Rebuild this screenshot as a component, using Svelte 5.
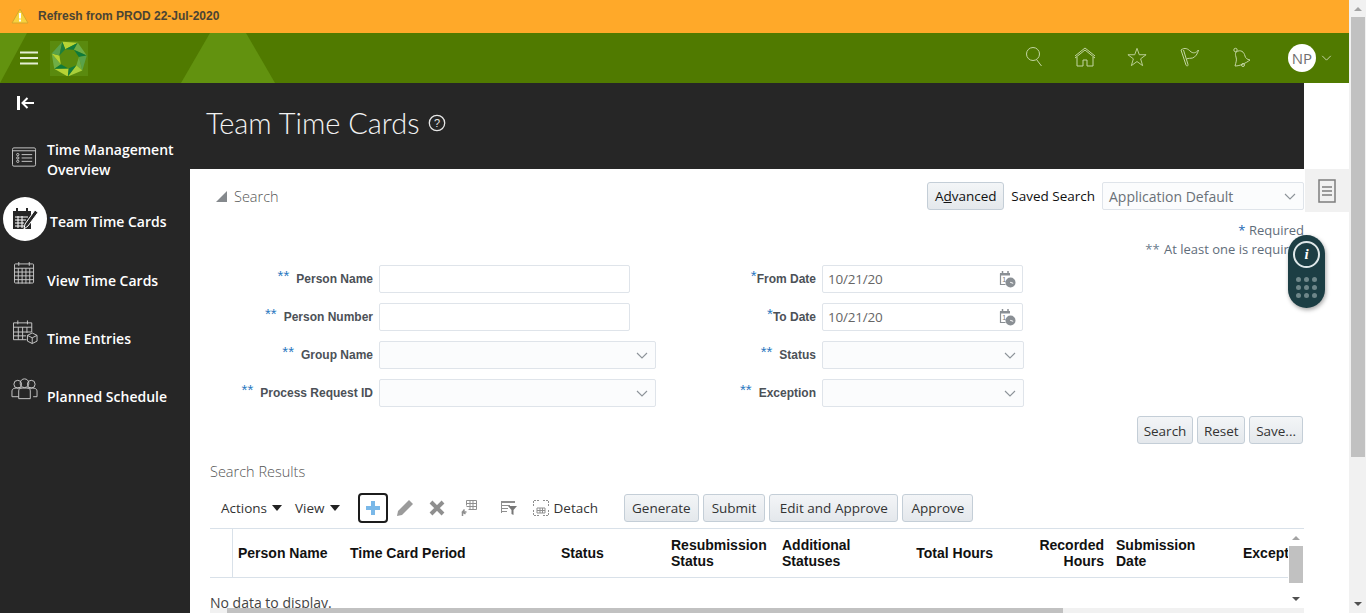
<script>
  const nav = [
    { id: 'overview', label: 'Time Management Overview' },
    { id: 'team', label: 'Team Time Cards', active: true },
    { id: 'view', label: 'View Time Cards' },
    { id: 'entries', label: 'Time Entries' },
    { id: 'planned', label: 'Planned Schedule' }
  ];
  const left = [
    { label: 'Person Name', type: 'text' },
    { label: 'Person Number', type: 'text' },
    { label: 'Group Name', type: 'select' },
    { label: 'Process Request ID', type: 'select' }
  ];
  const right = [
    { label: 'From Date', type: 'date', req: 1 },
    { label: 'To Date', type: 'date', req: 1 },
    { label: 'Status', type: 'select' },
    { label: 'Exception', type: 'select' }
  ];
  const cols = [
    { t: ['Person Name'], c: 'c1' },
    { t: ['Time Card Period'], c: 'c2' },
    { t: ['Status'], c: 'c3' },
    { t: ['Resubmission', 'Status'], c: 'c4' },
    { t: ['Additional', 'Statuses'], c: 'c5' },
    { t: ['Total Hours'], c: 'c6 ra' },
    { t: ['Recorded', 'Hours'], c: 'c7 ra' },
    { t: ['Submission', 'Date'], c: 'c8' },
    { t: ['Exception'], c: 'c9' }
  ];
  const n = 7, cx = 19, cy = 17.5;
  const pt = (r, i) => {
    const a = ((i * 360) / n - 112) * Math.PI / 180;
    return [(cx + r * Math.cos(a)).toFixed(1), (cy + r * Math.sin(a)).toFixed(1)].join(',');
  };
  const outerColors = ['#b6d335', '#6fae45', '#5aa24a', '#a8cf3a', '#b6d335', '#6fae45', '#5aa24a'];
  const innerColors = ['#137c3c', '#0e7a3b', '#6fae45', '#137c3c', '#0f7a3a', '#b6d335', '#1d7f3c'];
  const tris = [];
  for (let i = 0; i < n; i++) {
    tris.push({ c: outerColors[i], p: [pt(18, i), pt(18, i + 1), pt(10, i)].join(' ') });
    tris.push({ c: innerColors[i], p: [pt(10, i), pt(10, i + 1), pt(18, i + 1)].join(' ') });
  }
</script>

{#snippet dateIcon()}
  <svg class="date-ic" viewBox="0 0 18 18" width="18" height="18">
    <path d="M2.500 3.500v11h5" fill="none" stroke="#8a8f94" stroke-width="1.200"/>
    <path d="M2 3h10v2.500H2z" fill="#8a8f94"/>
    <path d="M4.500 1v3M10 1v3" stroke="#8a8f94" stroke-width="1.500"/>
    <text x="4.200" y="12" font-size="7" fill="#777" font-family="Liberation Sans">1</text>
    <circle cx="12.500" cy="12.500" r="5" fill="#8a8f94"/>
    <path d="M12.200 12.300l3 1" stroke="#fff" stroke-width="1"/>
  </svg>
{/snippet}

{#snippet chevron()}
  <svg class="chev" viewBox="0 0 12 7" width="12" height="7"><path d="M1 1l5 5 5-5" fill="none" stroke="#8d9399" stroke-width="1.100"/></svg>
{/snippet}

{#snippet field(f)}
  <div class="row">
    <div class="lab">
      {#if f.req}<span class="req">*</span>{:else}<span class="req dbl">**</span>{/if}<span class="lt">{f.label}</span>
    </div>
    {#if f.type === 'select'}
      <div class="inp sel wide">{@render chevron()}</div>
    {:else if f.type === 'date'}
      <div class="inp date"><span>10/21/20</span>{@render dateIcon()}</div>
    {:else}
      <div class="inp"></div>
    {/if}
  </div>
{/snippet}

<div class="page">
  <div class="viewport">
    <div class="banner">
      <svg viewBox="0 0 18 16" width="18" height="16"><path d="M9 1L17 15H1z" fill="#f7d23e" stroke="#d6a62c" stroke-width="1"/><path d="M9 5v5.500" stroke="#fff" stroke-width="2"/><path d="M9 11.500v2" stroke="#fff" stroke-width="2"/></svg>
      <span>Refresh from PROD 22-Jul-2020</span>
    </div>
    <header class="top">
      <svg class="deco" viewBox="0 0 1349 50" width="1349" height="50"><path d="M0 0H27L0 50z" fill="#62920f"/><path d="M210 0h36l29 50H181z" fill="#62920f"/></svg>
      <svg class="burger" viewBox="0 0 18 14" width="18" height="14"><path d="M0 1.500h18M0 7h18M0 12.500h18" stroke="#e4eed3" stroke-width="2"/></svg>
      <svg class="logo" viewBox="0 0 38 35" width="38" height="35">
        <rect width="38" height="35" fill="#5a8a0e"/>
        {#each tris as t}<polygon points={t.p} fill={t.c}/>{/each}
      </svg>
      <div class="icons">
        <svg viewBox="0 0 18 20" width="18" height="20"><circle cx="7" cy="7" r="6.500"/><path d="M10.500 12.500l5 6.500"/></svg>
        <svg viewBox="0 0 22 20" width="22" height="20"><path d="M1 9l10-8 10 8M1 11l10-8 10 8M3 10v9h6v-6h4v6h6v-9"/></svg>
        <svg viewBox="0 0 22 21" width="20" height="20"><path d="M11 1l2.500 7H21l-6 4.500 2.200 7.500L11 15.500 4.800 20 7 12.500 1 8h7.500z"/></svg>
        <svg class="flag" viewBox="0 0 20 20" width="20" height="20"><path d="M1 3l5 15c.5 1.500 2.500 1 2-.5L3.500 3"/><path d="M1 3C5 0 8 2 10 4c3 3 6 2 8.500-1-1 4-3 7-6 8-2 .5-4 0-6 1"/></svg>
        <svg viewBox="0 0 20 21" width="20" height="21"><path d="M4 5C9 2 12 5 13 9c.5 2 2 3.500 5 4-4 3-10 6-15 6 1-4 2-6 1-9-.5-2-1-3 0-5z"/><circle cx="3.500" cy="3" r="1.700"/><circle cx="11" cy="18" r="1.500"/></svg>
      </div>
      <div class="avatar">NP</div>
      <svg class="av-chev" viewBox="0 0 12 7" width="11" height="6"><path d="M1 1l5 5 5-5" fill="none" stroke="#d5e2bf" stroke-width="1"/></svg>
    </header>

    <div class="body">
      <aside class="side">
        <svg class="collapse" viewBox="0 0 18 14" width="18" height="14"><path d="M1.500 0v14" stroke="#fff" stroke-width="3"/><path d="M17 7H6M10.500 2L5.500 7l5 5" fill="none" stroke="#fff" stroke-width="2"/></svg>
        <nav>
          {#each nav as n}
            <div class="nav-item {n.id}" class:active={n.active}>
              <span class="nav-ic">
                {#if n.id === 'overview'}
                  <svg viewBox="0 0 26 21" width="25" height="21" fill="none" stroke="#c9c9c9"><rect x=".5" y=".5" width="24" height="19" rx="1.500"/><path d="M.5 3.500h24M10 7.500h11M10 11h11M10 14.500h11"/><circle cx="6" cy="7.500" r="1.200"/><circle cx="6" cy="11" r="1.200"/><circle cx="6" cy="14.500" r="1.200"/></svg>
                {:else if n.id === 'team'}
                  <svg viewBox="0 0 26 26" width="26" height="26"><rect x="1" y="5" width="18" height="18" fill="#262626"/><path d="M5 2v5M15 2v5" stroke="#262626" stroke-width="2"/><path d="M3 11h13M3 14h11M3 17h9M3 20h9M6 10v12M10 10v12" stroke="#fff" stroke-width="1"/><path d="M23 4l3 2.500L16 20l-4 3 1-5z" fill="#262626" stroke="#fff" stroke-width="1"/></svg>
                {:else if n.id === 'view'}
                  <svg viewBox="0 0 22 24" width="21" height="24" fill="none" stroke="#c9c9c9"><rect x=".5" y="2.500" width="20" height="20" rx="1"/><path d="M.5 7h20M.5 11h20M.5 15h20M.5 19h20M4.500 7v16M8.500 7v16M12.500 7v16M16.500 7v16M5 .5v4M16 .5v4"/></svg>
                {:else if n.id === 'entries'}
                  <svg viewBox="0 0 26 26" width="25" height="26" fill="none" stroke="#c9c9c9"><path d="M14 21H.5V3.500h19V13M.5 8h19M.5 13h19M.5 17h13M5.500 8v13M10 8v13M14.500 8v6M5 1v4M15 1v4"/><path d="M20 14l5 2.500v6L20 25l-5-2.500v-6zM15 16.500l5 2.500 5-2.500M20 19v6"/></svg>
                {:else}
                  <svg viewBox="0 0 28 22" width="27" height="22" fill="none" stroke="#c9c9c9"><circle cx="14" cy="5" r="4.500"/><circle cx="7" cy="6" r="4"/><circle cx="21" cy="6" r="4"/><path d="M1 19v-6c0-2 2-3 5-3h16c3 0 5 1 5 3v6h-4M8 21v-8c0-2 1-3 3-3M20 21v-8c0-2-1-3-3-3M8 21h12M1 19h7"/></svg>
                {/if}
              </span>
              <span class="nav-t">{n.label}</span>
            </div>
          {/each}
        </nav>
      </aside>

      <main class="main">
        <div class="title"><h1>Team Time Cards</h1>
          <svg viewBox="0 0 18 18" width="18" height="18"><circle cx="9" cy="9" r="7.700" fill="none" stroke="#e6e6e6" stroke-width="1.300"/><text x="9" y="13" text-anchor="middle" font-size="11" fill="#e6e6e6" font-family="Liberation Sans">?</text></svg>
        </div>
        <div class="content">
          <div class="search-head">
            <div class="disc"><i class="tri"></i><span>Search</span></div>
            <div class="saved">
              <button class="btn adv">A<u>d</u>vanced</button>
              <span class="saved-l">Saved Search</span>
              <div class="inp sel ss"><span>Application Default</span>{@render chevron()}</div>
            </div>
          </div>
          <div class="notes">
            <div><span class="star">*</span> Required</div>
            <div><span class="star2">**</span> At least one is required</div>
          </div>
          <div class="form">
            <div class="col lc">{#each left as f}{@render field(f)}{/each}</div>
            <div class="col rc">{#each right as f}{@render field(f)}{/each}</div>
          </div>
          <div class="actions">
            <button class="btn">Search</button><button class="btn">Reset</button><button class="btn">Save...</button>
          </div>
          <h2>Search Results</h2>
          <div class="toolbar">
            <span class="menu">Actions <i class="caret"></i></span>
            <span class="menu">View <i class="caret"></i></span>
            <span class="add"><svg viewBox="0 0 14 14" width="14" height="14"><path d="M7 0v14M0 7h14" stroke="#7ab8e8" stroke-width="4"/></svg></span>
            <svg class="t-pen" viewBox="0 0 18 18" width="18" height="18"><path d="M13 1l4 4L6 16l-5 1 1-5z" fill="#9b9b9b"/></svg>
            <svg class="t-x" viewBox="0 0 16 16" width="16" height="16"><path d="M2 2l12 12M14 2L2 14" stroke="#8f8f8f" stroke-width="4"/></svg>
            <svg class="t-fr" viewBox="0 0 18 18" width="18" height="18" fill="none" stroke="#8f8f8f"><path d="M6.500 1.500h10v9h-8M6.500 1.500v5M6.500 4.500h10M6.500 7.500h10M10 1.500v9M13 1.500v9"/><path d="M2.500 17v-4h4M4.500 10.500l-2 2.500 3 2" stroke-width="1.500"/></svg>
            <svg class="t-fl" viewBox="0 0 18 16" width="18" height="16"><path d="M1 1h14v2H1zM1 5h9v1H1zM1 8h7v1H1zM1 11h6v1H1zM1 1h1v12H1z" fill="#8f8f8f"/><path d="M8 6h9l-3.500 4v5l-2-1v-4z" fill="#777"/></svg>
            <span class="detach">
              <svg viewBox="0 0 16 16" width="16" height="16" fill="none" stroke="#8f8f8f"><path d="M.5 10v5.500H6M10 .5h5.500V6M.5 6V.5H7M15.500 10v5.500H10" stroke-dasharray="2 1"/><path d="M4 8h8v5H4zM4 10.500h8M7 8v5M9.500 8v5"/></svg>
              Detach
            </span>
            <span class="t-btns">
              <button class="btn">Generate</button><button class="btn">Submit</button><button class="btn">Edit and Approve</button><button class="btn">Approve</button>
            </span>
          </div>
          <div class="table">
            <div class="thead">
              <div class="c0"></div>
              {#each cols as col}
                <div class="th {col.c}">{#each col.t as line}<div>{line}</div>{/each}</div>
              {/each}
            </div>
            <div class="nodata">No data to display.</div>
            <div class="hbar"><b></b></div>
            <div class="vbar"><i class="up"></i><b></b><i class="dn"></i></div>
          </div>
        </div>
      </main>

      <div class="rail">
        <div class="tab">
          <svg viewBox="0 0 18 24" width="18" height="24" fill="none" stroke="#7d7d7d"><rect x="1" y="1" width="16" height="22" stroke-width="1.500"/><path d="M4 8h10M4 12h10M4 16h10" stroke-width="1.500"/></svg>
        </div>
      </div>
    </div>
  </div>
  <div class="scroll">
    <i class="up"></i><b></b><i class="dn"></i>
  </div>
  <div class="pill">
    <span class="pill-i">i</span>
    <span class="dots">{#each Array(9) as _}<i></i>{/each}</span>
  </div>
</div>

<style>
  :global(body) { margin: 0; background: #fff; }
  .page { position: relative; display: flex; width: 1366px; height: 613px; overflow: hidden; font-family: "Open Sans", "Noto Sans", sans-serif; color: #333; }
  .viewport { width: 1349px; display: flex; flex-direction: column; }
  .banner { height: 33px; background: #ffa929; display: flex; align-items: center; gap: 9px; padding-left: 11px; font: bold 12px "Liberation Sans", sans-serif; color: #4a4434; box-sizing: border-box; padding-bottom: 2px; }
  .top { position: relative; height: 50px; background: #507a00; display: flex; align-items: center; overflow: hidden; }
  .deco { position: absolute; left: 0; top: 0; }
  .burger { position: relative; margin-left: 20px; }
  .logo { position: relative; margin-left: 12px; }
  .icons { position: relative; display: flex; align-items: center; margin-left: auto; padding-bottom: 2px; }
  .icons svg { fill: none; stroke: #c3d6a2; stroke-width: 1; }
  .icons svg:nth-child(2) { margin-left: 30px; }
  .icons svg:nth-child(3) { margin-left: 31px; }
  .icons svg:nth-child(4) { margin-left: 33px; }
  .icons svg:nth-child(5) { margin-left: 32px; }
  .avatar { position: relative; width: 28px; height: 28px; border-radius: 50%; background: #fff; color: #6f6f6f; font-size: 15px; line-height: 28px; text-align: center; margin-left: 36px; }
  .av-chev { position: relative; margin-left: 5px; margin-right: 17px; }

  .body { flex: 1; display: flex; min-height: 0; }
  .side { width: 190px; background: #262626; position: relative; flex: none; }
  .collapse { display: block; margin: 13px 0 0 17px; }
  nav { margin-top: 30px; }
  .nav-item { display: flex; align-items: center; color: #fff; font-weight: 600; font-size: 14px; line-height: 20px; padding-left: 47px; position: relative; height: 44px; margin-bottom: 14px; }
  .nav-t { display: block; }
  .nav-item.overview { height: 40px; margin-bottom: 20px; }
  .nav-item.overview .nav-t { width: 140px; }
  .nav-item.team { margin-bottom: 15px; padding-left: 50px; }
  .nav-ic { position: absolute; left: 11px; display: flex; }
  .nav-item.overview .nav-ic { top: 7px; left: 12px; }
  .nav-item.view .nav-ic { left: 14px; top: 2px; }
  .nav-item.entries .nav-ic { left: 13px; top: 2px; }
  .nav-item.planned .nav-ic { left: 11px; top: 3px; }
  .nav-item.team .nav-ic { left: 3px; top: -3px; width: 44px; height: 44px; border-radius: 50%; background: #fff; align-items: center; justify-content: center; }

  .main { width: 1114px; flex: none; display: flex; flex-direction: column; min-width: 0; }
  .title { height: 86px; background: #262626; display: flex; align-items: center; gap: 8px; padding: 0 0 7px 16px; box-sizing: border-box; flex: none; }
  h1 { margin: 0; font-family: Lato, "Open Sans", sans-serif; font-weight: 300; font-size: 29px; color: #f2f2f2; line-height: 1; }
  .content { padding: 13px 0 0 20px; flex: 1; min-height: 0; position: relative; }
  .search-head { display: flex; justify-content: space-between; height: 28px; }
  .disc { display: flex; align-items: center; gap: 7px; padding-left: 6px; font-size: 14.500px; font-weight: 300; color: #555; }
  .tri { width: 0; height: 0; border-left: 11px solid transparent; border-bottom: 11px solid #85898d; }
  .saved { display: flex; align-items: center; }
  .btn { height: 28px; box-sizing: border-box; padding: 0 6px; border: 1px solid #c4ced7; border-radius: 3px; background: linear-gradient(#f3f5f7, #e4e8ec); font: 400 13.500px "Open Sans", sans-serif; color: #333; white-space: nowrap; }
  .adv { color: #111; width: 77px; padding: 0; }
  .saved-l { margin: 0 7px; font-size: 13.500px; color: #111; }
  .inp { height: 28px; box-sizing: border-box; width: 251px; border: 1px solid #dfe4ea; border-radius: 2px; background: #fff; display: flex; align-items: center; justify-content: space-between; padding: 0 6px 0 5px; font-size: 13.500px; letter-spacing: -.2px; color: #666; }
  .sel { background: #fbfcfd; }
  .chev { margin: 0 1px 0 auto; }
  .ss { width: 202px; color: #6a7178; font-size: 14px; letter-spacing: 0; padding-left: 6px; }
  .notes { text-align: right; font-size: 13px; color: #5f6d7a; line-height: 19px; margin-top: 11px; white-space: nowrap; }
  .notes > div { height: 19px; }
  .star { color: #1a67b3; }
  .star2 { color: #6b7d8d; margin-right: 1px; }
  .form { display: flex; margin-top: 6px; }
  .col { display: flex; flex-direction: column; gap: 10px; }
  .row { display: flex; align-items: center; }
  .lab { display: flex; justify-content: flex-end; align-items: center; font: bold 12px "Liberation Sans", sans-serif; color: #4c5157; text-align: right; white-space: nowrap; }
  .lc { width: 446px; flex: none; }
  .lc .lab { width: 163px; margin-right: 6px; }
  .rc .lab { width: 160px; margin-right: 6px; }
  .req { color: #2a78c0; font-size: 15px; font-weight: 400; line-height: 12px; align-self: flex-start; margin-top: -2px; }
  .dbl { margin-right: 7px; }
  .wide { width: 277px; }
  .rc .inp { width: 201px; }
  .rc .wide { width: 202px; }
  .date-ic { margin-right: 0; }
  .actions { display: flex; justify-content: flex-end; gap: 4px; margin: 9px 1px 0 0; }
  .actions .btn { padding-top: 1px; }
  .actions .btn:nth-child(2) { padding: 1px 5.500px 0; }
  h2 { margin: 18px 0 0; font-size: 14.500px; font-weight: 300; color: #555; line-height: 20px; }
  .toolbar { display: flex; align-items: center; height: 28px; margin-top: 12px; font-size: 13.500px; color: #333; padding-left: 11px; }
  .menu { display: inline-flex; align-items: center; gap: 5px; margin-right: 13px; }
  .menu + .menu { margin-right: 10px; }
  .caret { width: 0; height: 0; border: 5px solid transparent; border-top: 6px solid #222; border-bottom: 0; }
  .add { box-sizing: border-box; width: 30px; height: 30px; margin-left: 8px; border: 2px solid #1c1c1c; border-radius: 4px; display: flex; align-items: center; justify-content: center; }
  .t-pen { margin-left: 8px; }
  .t-x { margin-left: 15px; }
  .t-fr { margin-left: 15px; }
  .t-fl { margin-left: 22px; }
  .detach { display: inline-flex; align-items: center; gap: 5px; margin-left: 15px; color: #333; }
  .t-btns { display: inline-flex; gap: 4px; margin-left: 26px; }
  .t-btns .btn { padding: 0 8px; }
  .t-btns .btn:nth-child(1) { padding: 0 7px; }
  .t-btns .btn:nth-child(3) { padding: 0 9.500px; }
  .table { position: relative; margin-top: 6px; border-top: 1px solid #d9e1e9; }
  .thead { display: grid; grid-template-columns: 23px 112px 211px 110px 111px 117px 111px 111px 114px 90px; height: 48px; border-bottom: 1px solid #d9e1e9; overflow: hidden; font: bold 14px/16px "Liberation Sans", sans-serif; color: #111; }
  .c0 { border-right: 1px solid #d9e1e9; }
  .th { align-self: center; padding-left: 5px; white-space: nowrap; }
  .ra { text-align: right; padding: 0 12px 0 0; }
  .c8 { padding-left: 0; }
  .c9 { padding-left: 13px; }
  .vbar { position: absolute; right: 0; top: 0; bottom: 5px; width: 16px; background: #fff; display: flex; flex-direction: column; align-items: center; }
  .vbar .up { margin: 7px 0 6px; }
  .vbar b { width: 14px; height: 37px; background: #c1c1c1; }
  .vbar .dn { margin-top: auto; margin-bottom: 7px; }
  .nodata { height: 30px; line-height: 50px; font-size: 14px; color: #444; overflow: hidden; }
  .hbar { height: 5px; background: #f1f1f1; }
  .hbar b { display: block; width: 836px; height: 100%; margin-left: 17px; background: #c1c1c1; }

  .rail { flex: 1; position: relative; padding-top: 86px; }
  .tab { margin-left: 1px; height: 43px; background: #f1f1f1; display: flex; align-items: center; justify-content: center; }

  .scroll { width: 17px; background: #f1f1f1; position: relative; display: flex; flex-direction: column; align-items: center; }
  .scroll b { width: 14px; height: 440px; background: #c1c1c1; }
  .up, .dn { display: block; width: 0; height: 0; border: 4px solid transparent; flex: none; }
  .up { border-bottom: 4px solid #a3a3a3; border-top: 0; }
  .dn { border-top: 4px solid #505050; border-bottom: 0; }
  .scroll .up { margin: 7px 0 6px; }
  .scroll .dn { margin-top: auto; margin-bottom: 7px; }
  .pill { position: absolute; left: 1288px; top: 235px; width: 37px; height: 73px; border-radius: 19px; background: #1c3e44; box-shadow: 1px 2px 4px rgba(0,0,0,.35); display: flex; flex-direction: column; align-items: center; }
  .pill-i { margin-top: 6px; width: 23px; height: 23px; border: 2px solid #dfe8e9; border-radius: 50%; color: #fff; font: italic bold 15px/23px "Liberation Serif", serif; text-align: center; }
  .dots { margin-top: 9px; display: grid; grid-template-columns: repeat(3, 5px); gap: 3px; }
  .dots i { width: 5px; height: 5px; border-radius: 50%; background: #6e8689; }
</style>
